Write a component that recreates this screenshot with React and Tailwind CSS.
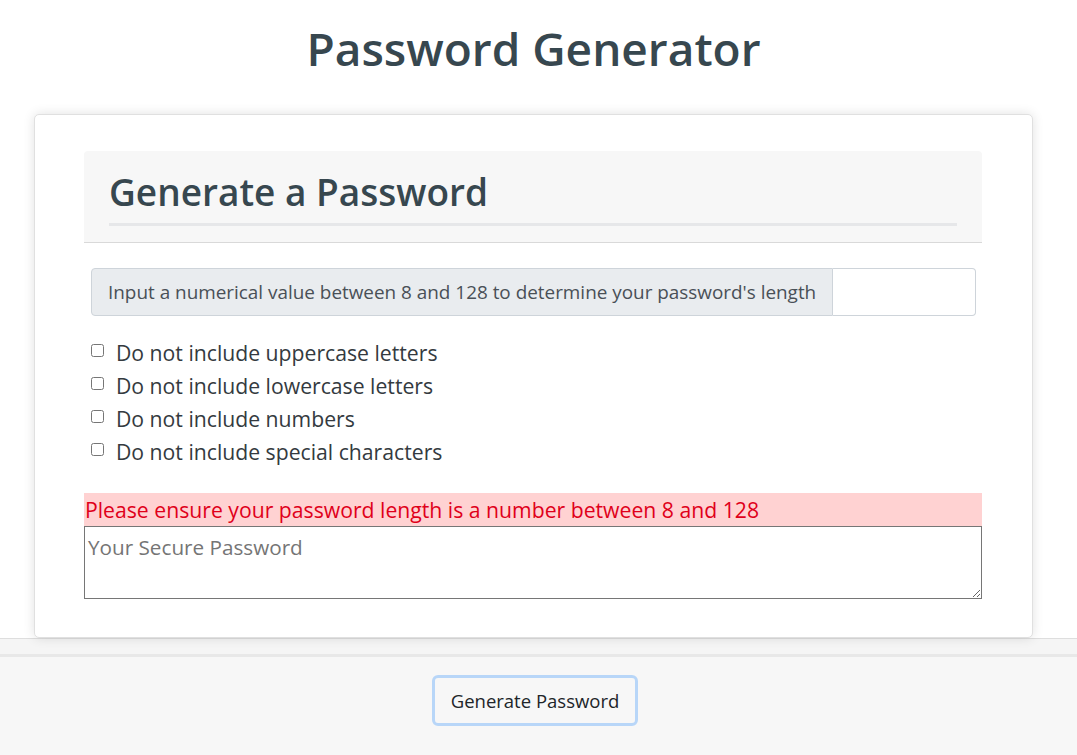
import { useState } from "react";

const options = [
  "Do not include uppercase letters",
  "Do not include lowercase letters",
  "Do not include numbers",
  "Do not include special characters",
];

export default function App() {
  const [length, setLength] = useState("");

  return (
    <div className="min-h-screen flex flex-col bg-white font-['Open_Sans',sans-serif]">
      <header className="h-[114px] pt-[19px] pl-[34px]">
        <h1 className="w-[999px] text-center text-[46px] leading-[58px] font-semibold text-[#37474f]">
          Password Generator
        </h1>
      </header>

      <main className="pl-[34px]">
        <div className="relative z-10 w-[999px] bg-white border border-[#e0e0e0] rounded-[5px] shadow-[0_0_12px_rgba(0,0,0,0.12)] pl-[49px] pr-[50px] pt-[36px] pb-[38px]">
          <div className="bg-[#f7f7f7] rounded-t-[4px] border-b border-[#d9d9d9] px-[25px] pt-[15px] h-[92px]">
            <h2 className="text-[37px] leading-[52px] font-semibold text-[#37474f] border-b-[3px] border-[#e6e7e9] pb-[5px]">
              Generate a Password
            </h2>
          </div>

          <div className="mt-[25px] ml-[7px] mr-[6px] flex h-[48px]">
            <span className="flex items-center px-[16px] bg-[#e9ecef] border border-[#ced4da] rounded-l-[4px] text-[18.9px] text-[#495057] whitespace-nowrap">
              Input a numerical value between 8 and 128 to determine your password's length
            </span>
            <input
              type="text"
              value={length}
              onChange={(e) => setLength(e.target.value)}
              className="flex-1 min-w-0 border border-l-0 border-[#ced4da] rounded-r-[4px] bg-white px-[16px] text-[18px] outline-none"
            />
          </div>

          <div className="mt-[20px] ml-[7px]">
            {options.map((label) => (
              <label key={label} className="flex items-center h-[33px] text-[21.2px] text-[#343a40]">
                <input type="checkbox" className="w-[13px] h-[13px] m-0 mr-[12px] -translate-y-[2px]" />
                {label}
              </label>
            ))}
          </div>

          <div className="mt-[25px] h-[33px] bg-[#ffd2d2] text-[#e0001a] text-[21.2px] leading-[33px] pl-[1px]">
            Please ensure your password length is a number between 8 and 128
          </div>
          <textarea
            placeholder="Your Secure Password"
            className="block w-full h-[73px] border border-[#767676] px-[3px] pt-[6px] text-[20.7px] leading-[28px] placeholder:text-[#757575] outline-none"
          />
        </div>
      </main>

      <footer className="flex-1 flex flex-col border-t border-[#dedede] bg-[#f5f5f5]">
        <div className="h-[15px]" />
        <div className="flex-1 border-t-[3px] border-[#e8e8e8] bg-[#f7f7f7] flex justify-center pt-[18px] pr-[7px]">
          <button className="h-[51px] w-[206px] rounded-[6px] border-[3px] border-[#b8d6f8] bg-[#f7f7f7] text-[18.5px] text-[#212529]">
            Generate Password
          </button>
        </div>
      </footer>
    </div>
  );
}
